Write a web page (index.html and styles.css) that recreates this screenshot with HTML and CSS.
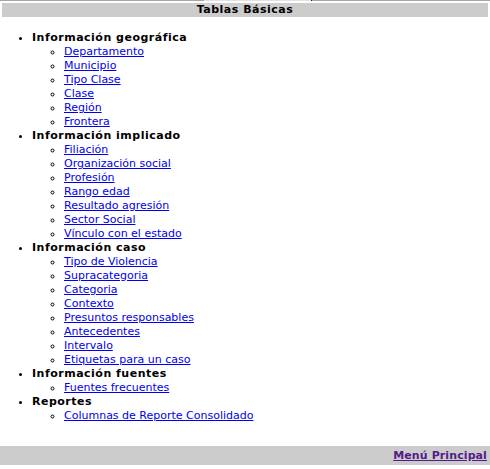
FILE: index.html
```html
<!DOCTYPE html>
<html lang="es">
<head>
<meta charset="utf-8">
<title>Tablas Básicas</title>
<link rel="stylesheet" href="styles.css">
</head>
<body>
<div class="topline"><span class="seg a"></span><span class="seg b"></span><span class="seg c"></span><span class="seg d"></span></div>
<div class="titlewrap"><div class="title">Tablas Básicas</div></div>
<ul class="menu">
  <li class="grp">Información geográfica
    <ul class="sub">
      <li><a href="#">Departamento</a></li>
      <li><a href="#">Municipio</a></li>
      <li><a href="#">Tipo Clase</a></li>
      <li><a href="#">Clase</a></li>
      <li><a href="#">Región</a></li>
      <li><a href="#">Frontera</a></li>
    </ul>
  </li>
  <li class="grp">Información implicado
    <ul class="sub">
      <li><a href="#">Filiación</a></li>
      <li><a href="#">Organización social</a></li>
      <li><a href="#">Profesión</a></li>
      <li><a href="#">Rango edad</a></li>
      <li><a href="#">Resultado agresión</a></li>
      <li><a href="#">Sector Social</a></li>
      <li><a href="#">Vínculo con el estado</a></li>
    </ul>
  </li>
  <li class="grp">Información caso
    <ul class="sub">
      <li><a href="#">Tipo de Violencia</a></li>
      <li><a href="#">Supracategoria</a></li>
      <li><a href="#">Categoria</a></li>
      <li><a href="#">Contexto</a></li>
      <li><a href="#">Presuntos responsables</a></li>
      <li><a href="#">Antecedentes</a></li>
      <li><a href="#">Intervalo</a></li>
      <li><a href="#">Etiquetas para un caso</a></li>
    </ul>
  </li>
  <li class="grp">Información fuentes
    <ul class="sub">
      <li><a href="#">Fuentes frecuentes</a></li>
    </ul>
  </li>
  <li class="grp">Reportes
    <ul class="sub">
      <li><a href="#">Columnas de Reporte Consolidado</a></li>
    </ul>
  </li>
</ul>
<div class="footer"><a class="visited" href="#">Menú Principal</a></div>
</body>
</html>
```
FILE: styles.css
```css
html, body {
  margin: 0;
  padding: 0;
  background: #fff;
}
body {
  font-family: "DejaVu Sans", Verdana, sans-serif;
  font-size: 11px;
  line-height: 14px;
  color: #000;
}
.topline {
  display: flex;
  height: 1px;
}
.seg { display: block; height: 1px; }
.seg.a { width: 204px; background: #a9a49e; }
.seg.b { width: 107px; background: #e4e2df; }
.seg.c { width: 1px; background: #222; }
.seg.d { flex: 1; background: #a9a49e; }
.titlewrap {
  padding: 2px;
}
.title {
  background: #cccccc;
  text-align: center;
  font-weight: bold;
  letter-spacing: 0.5px;
  height: 14px;
  line-height: 14px;
}
.menu {
  list-style: disc;
  margin: 12px 0 0 0;
  padding-left: 32px;
}
.grp {
  font-weight: bold;
  letter-spacing: 0.5px;
}
.sub {
  list-style: circle;
  margin: 0;
  padding-left: 32px;
  font-weight: normal;
  letter-spacing: 0;
}
a { color: #0000ee; }
a.visited { color: #551a8b; }
.footer {
  margin-top: 23px;
  background: #cccccc;
  height: 19px;
  line-height: 20px;
  text-align: right;
  padding-right: 3px;
  font-weight: bold;
  letter-spacing: 0.1px;
}
```
